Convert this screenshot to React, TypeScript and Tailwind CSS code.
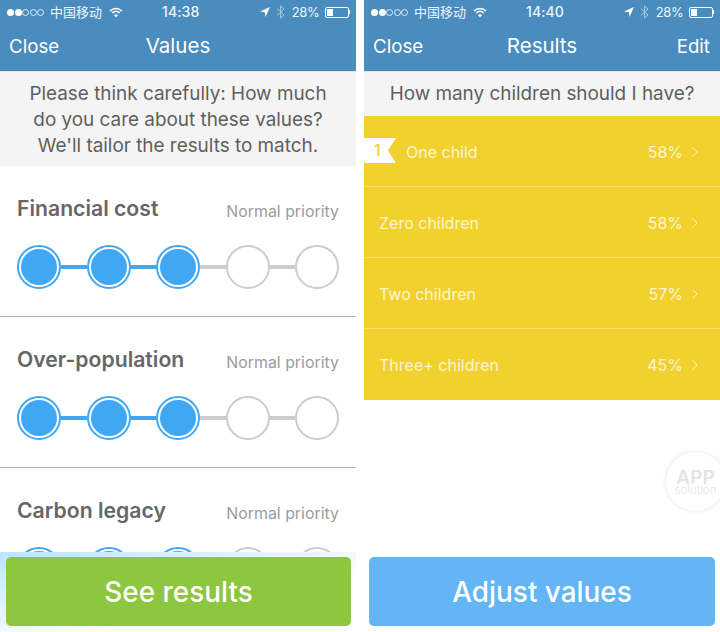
import React from "react";

const font = { fontFamily: "Inter, 'Noto Sans CJK SC', sans-serif" };

function StatusBar({ time }: { time: string }) {
  return (
    <div className="relative flex h-[24px] items-center pl-[7px] pr-[6px] text-[14px] text-[#eef5fa]">
      <div className="flex items-center gap-[0.5px]">
        {[0, 1].map((i) => (
          <span key={i} className="h-[7px] w-[7px] rounded-full bg-white" />
        ))}
        {[0, 1, 2].map((i) => (
          <span key={i} className="h-[7px] w-[7px] rounded-full border border-white/80" />
        ))}
      </div>
      <span className="mb-[2px] ml-[6px] text-[13px] leading-none" style={{ fontFamily: "'Noto Sans CJK SC', sans-serif" }}>中国移动</span>
      <svg className="ml-[7px]" width="14" height="11" viewBox="0 0 14 11" fill="none" stroke="white">
        <path d="M1 4 C4.500 0.500 9.500 0.500 13 4" strokeWidth="1.500" />
        <path d="M3.200 6 C5.500 3.900 8.500 3.900 10.800 6" strokeWidth="1.500" />
        <path d="M7 10.500 L5 8 C6 7 8 7 9 8 Z" fill="white" stroke="none" />
      </svg>
      <span className="absolute left-[162px] top-[3px] text-[14px] font-medium leading-[18px] tracking-[0.1px]">{time}</span>
      <div className="ml-auto flex items-center">
        <svg width="10" height="10" viewBox="0 0 10 10" fill="white"><path d="M10 0 L0 4.500 L4.800 5.200 L5.500 10 Z" /></svg>
        <svg className="ml-[6px]" width="9" height="14" viewBox="0 0 9 14" fill="none" stroke="#a9c8e0" strokeWidth="1"><path d="M1 3.500 L8 10 L4.500 13 V1 L8 4 L1 10.500" /></svg>
        <span className="ml-[7px] text-[13px] leading-none tracking-[-0.3px]">28%</span>
        <div className="ml-[5px] flex h-[11px] w-[24px] items-center rounded-[2px] border border-white p-[1px]">
          <div className="h-full w-[6px] bg-white" />
        </div>
        <div className="h-[4px] w-[1.500px] bg-white" />
      </div>
    </div>
  );
}

function NavBar({ title, time, edit }: { title: string; time: string; edit?: boolean }) {
  return (
    <header className="h-[72px] shrink-0 border-b border-[#dceaf4] bg-[#4a8cbe] text-white">
      <StatusBar time={time} />
      <div className="relative flex h-[47px] items-center justify-between pb-[1px] pl-[9px] pr-[10px] text-[18.700px]">
        <span>Close</span>
        <span className="absolute inset-x-0 top-[9px] text-center text-[20.500px] leading-[26px]">{title}</span>
        {edit && <span>Edit</span>}
      </div>
    </header>
  );
}

function Dot({ on }: { on: boolean }) {
  return (
    <div className={`flex h-[44px] w-[44px] shrink-0 items-center justify-center rounded-full border-2 bg-white ${on ? "border-[#3fa7f3]" : "border-[#cccccc]"}`}>
      {on && <div className="h-[36px] w-[36px] rounded-full bg-[#3fa7f3]" />}
    </div>
  );
}

function Rating() {
  return (
    <div className="flex items-center">
      <Dot on />
      <div className="h-[4px] flex-1 bg-[#3fa7f3]" />
      <Dot on />
      <div className="h-[4px] flex-1 bg-[#3fa7f3]" />
      <Dot on />
      <div className="h-[4px] flex-1 bg-[#cccccc]" />
      <Dot on={false} />
      <div className="h-[4px] flex-1 bg-[#cccccc]" />
      <Dot on={false} />
    </div>
  );
}

function Section({ title }: { title: string }) {
  return (
    <section className="h-[151px] shrink-0 border-b border-[#b4b4b4] px-[17px] pt-[29px]">
      <div className="flex h-[28px] items-center justify-between">
        <span className="text-[21.200px] font-semibold text-[#666666]">{title}</span>
        <span className="mt-[6px] text-[15.900px] text-[#9c9c9c]">Normal priority</span>
      </div>
      <div className="mt-[22px]"><Rating /></div>
    </section>
  );
}

function ResultRow({ label, pct, first }: { label: string; pct: string; first?: boolean }) {
  return (
    <div className="relative flex h-[71px] items-center border-b border-[#f6dd70] pr-[22px] pt-[1px] text-[16px] text-[#fdf6d5] last:border-b-0">
      {first && (
        <div className="absolute left-0 top-[22px] h-[25px] w-[32px] bg-white [clip-path:polygon(0_0,100%_0,24px_50%,100%_100%,0_100%)]">
          <span className="ml-[10px] text-[16px] font-medium leading-[25px] text-[#f2d02d]">1</span>
        </div>
      )}
      <span className={first ? "ml-[42px]" : "ml-[15px]"}>{label}</span>
      <span className="ml-auto">{pct}</span>
      <svg className="ml-[9px]" width="6" height="10" viewBox="0 0 6 10" fill="none" stroke="#fdf3c0" strokeWidth="1"><path d="M0.500 0.500 L5 5 L0.500 9.500" /></svg>
    </div>
  );
}

function BottomButton({ label, color, gradient, left }: { label: string; color: string; gradient?: boolean; left: string }) {
  return (
    <div className={`absolute inset-x-0 bottom-0 h-[80px] pb-[6px] pr-[5px] pt-[5px] ${left} ${gradient ? "bg-gradient-to-br from-[#b8e6ff] via-[#e6f6ff] via-40% to-white to-65%" : ""}`}>
      <button className={`flex h-[69px] w-full items-center justify-center rounded-[5px] pt-[2px] text-[27.900px] font-medium text-white ${color}`}>{label}</button>
    </div>
  );
}

export default function App() {
  return (
    <div className="flex h-[632px] w-[720px] gap-[8px] overflow-hidden bg-white" style={font}>
      <div className="relative flex h-full w-[356px] flex-col overflow-hidden">
        <NavBar title="Values" time="14:38" />
        <div className="flex h-[94px] shrink-0 items-center justify-center bg-[#f4f4f4] pt-[2px] text-center text-[18.900px] leading-[26px] text-[#5f5f5f]">
          <p>Please think carefully: How much<br />do you care about these values?<br />We'll tailor the results to match.</p>
        </div>
        <Section title="Financial cost" />
        <Section title="Over-population" />
        <Section title="Carbon legacy" />
        <BottomButton label="See results" color="bg-[#8dc63f]" gradient left="pl-[6px]" />
      </div>
      <div className="relative flex h-full w-[356px] flex-col overflow-hidden">
        <NavBar title="Results" time="14:40" edit />
        <div className="flex h-[44px] shrink-0 items-center justify-center bg-[#f4f4f4] text-[18.900px] text-[#5f5f5f]">How many children should I have?</div>
        <div className="bg-[#f2d02d]">
          <ResultRow label="One child" pct="58%" first />
          <ResultRow label="Zero children" pct="58%" />
          <ResultRow label="Two children" pct="57%" />
          <ResultRow label="Three+ children" pct="45%" />
        </div>
        <div className="absolute right-[-5px] top-[452px] flex h-[59px] w-[59px] flex-col items-center justify-center rounded-full bg-white pt-[2px] text-[#e4e4e4] shadow-[0_0_4px_rgba(0,0,0,0.12)]">
          <span className="text-[19px] font-semibold leading-[15px]">APP</span>
          <span className="text-[11.500px] font-light leading-[11px]">solution</span>
        </div>
        <BottomButton label="Adjust values" color="bg-[#64b5f6]" left="pl-[5px]" />
      </div>
    </div>
  );
}
